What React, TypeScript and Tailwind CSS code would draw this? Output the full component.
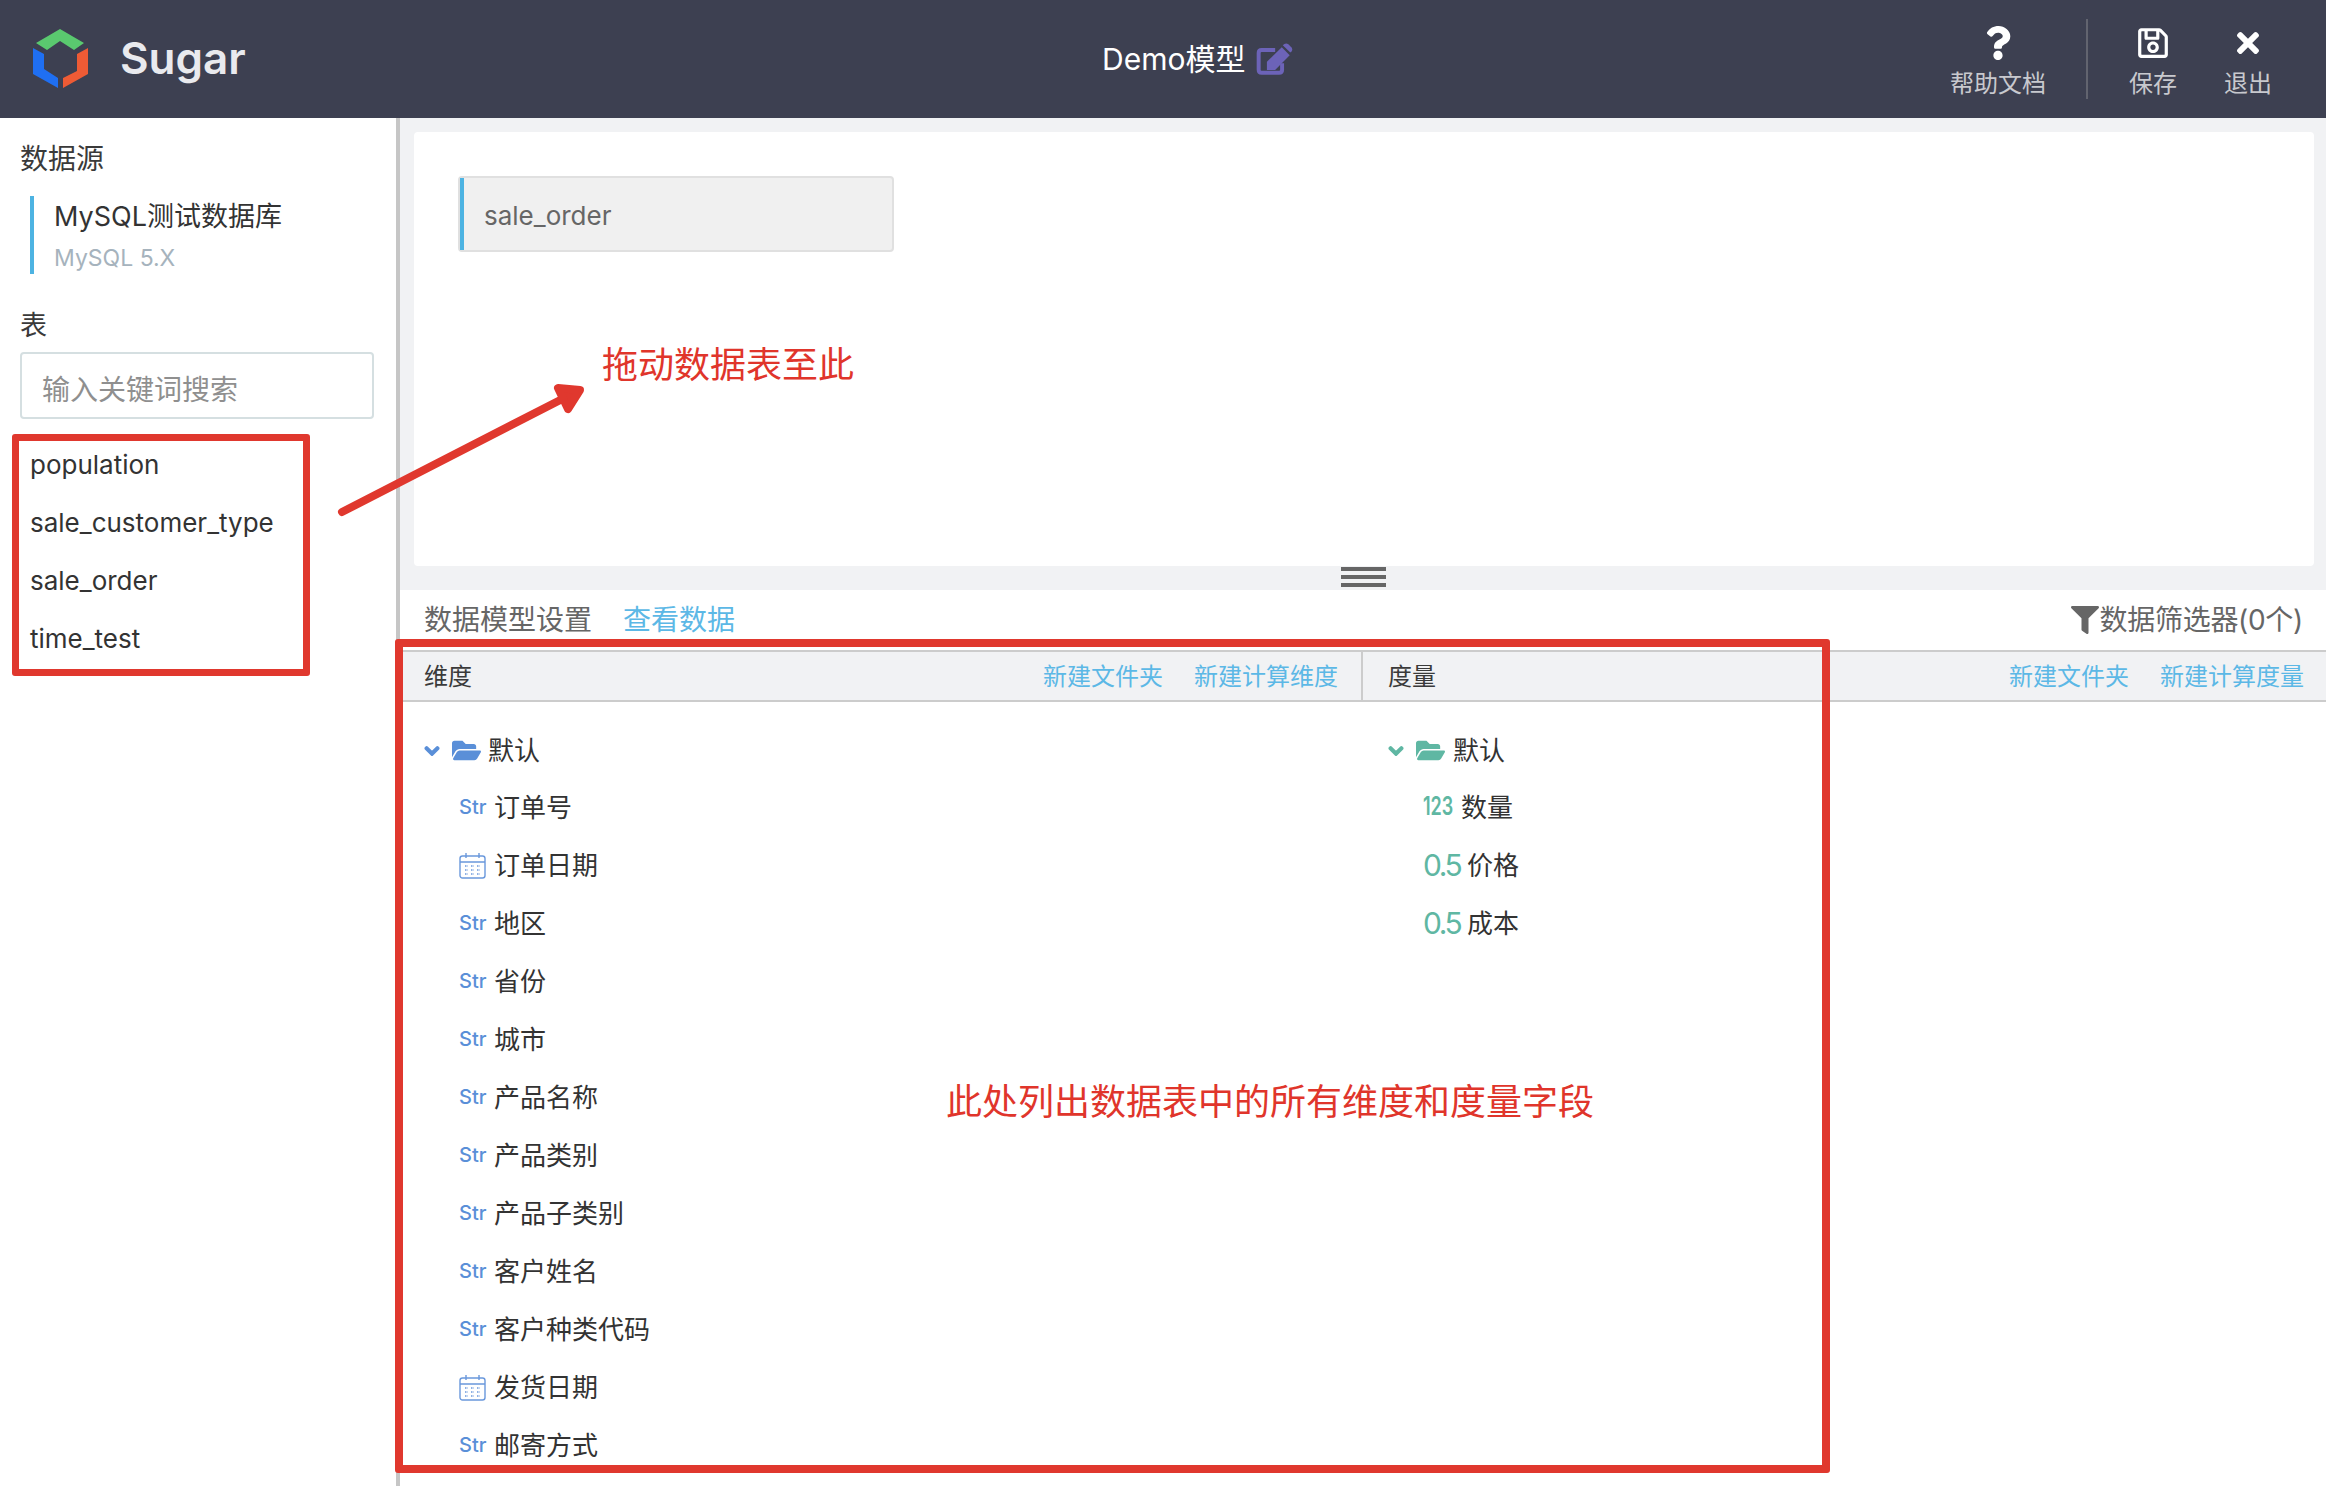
import React from "react";
import { FaQuestion, FaRegSave, FaTimes, FaFilter, FaChevronDown, FaFolderOpen } from "react-icons/fa";

const FONT = '"Inter","Noto Sans CJK SC",sans-serif';

function Calendar() {
  return (
    <svg width="27" height="27" viewBox="0 0 27 27" fill="none" stroke="#6a98dc" strokeWidth="1.4">
      <rect x="1" y="4" width="25" height="22" rx="2.5" />
      <path d="M1 10h25M7 1v5M20 1v5" />
      <path d="M6 14h3M12 14h3M18 14h3M6 18h3M12 18h3M18 18h3M6 22h3M12 22h3M18 22h3" strokeWidth="1.6" strokeDasharray="1.5 1" />
    </svg>
  );
}

function EditIcon() {
  return (
    <svg width="37" height="33" viewBox="650 125 112 100" className="ml-[11px]">
      <path d="M708 146H667Q658 146 658 155V206Q658 215 667 215H720Q729 215 729 206V186" fill="none" stroke="#6c63b8" strokeWidth="12" />
      <path d="M683 207V182L728 138L752 162L708 207Z" fill="#6c63b8" />
      <path d="M736 128Q742 124 748 129L757 138Q762 144 758 150L754 154L731 132Z" fill="#6c63b8" />
    </svg>
  );
}

function Field({ type, name }: { type: "str" | "date"; name: string }) {
  return (
    <div className="h-[58px] flex items-center pl-[59px]">
      <span className="w-[35px] shrink-0 flex items-center">
        {type === "str" ? (
          <span className="text-[20px] font-medium text-[#5a8fd8]">Str</span>
        ) : (
          <Calendar />
        )}
      </span>
      <span className="text-[26px] text-[#333]">{name}</span>
    </div>
  );
}

function Measure({ badge, name }: { badge: string; name: string }) {
  return (
    <div className="h-[58px] flex items-center pl-[60px]">
      {badge === "123" ? (
        <span className="w-[38px] shrink-0 text-[25px] font-semibold text-[#5fb7a3] inline-block origin-left scale-x-[0.72]">123</span>
      ) : (
        <span className="w-[44px] shrink-0 text-[30px] text-[#5fb7a3] tracking-[-2.5px]">{badge}</span>
      )}
      <span className="text-[26px] text-[#333]">{name}</span>
    </div>
  );
}

const dims: [("str" | "date"), string][] = [
  ["str", "订单号"],
  ["date", "订单日期"],
  ["str", "地区"],
  ["str", "省份"],
  ["str", "城市"],
  ["str", "产品名称"],
  ["str", "产品类别"],
  ["str", "产品子类别"],
  ["str", "客户姓名"],
  ["str", "客户种类代码"],
  ["date", "发货日期"],
  ["str", "邮寄方式"],
];

function HeadAction({ children }: { children: React.ReactNode }) {
  return <span className="text-[24px] text-[#5cb8e6]">{children}</span>;
}

function HeadTool({ label, icon }: { label: string; icon: React.ReactNode }) {
  return (
    <div className="flex flex-col items-center gap-[4px] mt-[8px]">
      <div className="h-[38px] flex items-center justify-center text-white">{icon}</div>
      <span className="text-[24px] leading-[36px] text-[#c8c9ce]">{label}</span>
    </div>
  );
}

export default function App() {
  return (
    <div className="relative w-[2326px] h-[1486px] overflow-hidden bg-white flex flex-col" style={{ fontFamily: FONT }}>
      <header className="h-[118px] shrink-0 bg-[#3d4051] flex items-center pl-[33px] relative">
        <svg width="56" height="60" viewBox="33 28 56 60" className="shrink-0">
          <polygon points="60,28 84,42 74,49 60,40 47,49 36,42" fill="#5ac96f" />
          <polygon points="33,47 44,53 44,68 58,77 58,87 33,73" fill="#1f6ff2" />
          <polygon points="88,47 88,73 63,87 63,77 77,70 77,53" fill="#ee5b35" />
        </svg>
        <span className="ml-[31px] -mt-[2px] text-[44px] font-semibold text-[#e9eaee]">Sugar</span>
        <div className="absolute left-[1102px] top-0 h-[118px] flex items-center">
          <span className="text-[30px] text-white">Demo模型</span>
          <EditIcon />
        </div>
        <div className="absolute right-[0px] top-0 h-[118px] flex items-center">
          <HeadTool label="帮助文档" icon={<FaQuestion size={34} />} />
          <div className="w-[2px] h-[80px] bg-[#62646f] ml-[40px] mr-[41px]" />
          <HeadTool label="保存" icon={<FaRegSave size={34} />} />
          <div className="w-[47px]" />
          <HeadTool label="退出" icon={<FaTimes size={32} />} />
          <div className="w-[54px]" />
        </div>
      </header>

      <div className="flex flex-1 min-h-0">
        <aside className="w-[400px] shrink-0 border-r-4 border-[#c6c6c6] pl-[20px]">
          <div className="mt-[23px] text-[28px] leading-[36px] text-[#3a3a3a]">数据源</div>
          <div className="mt-[19px] ml-[10px] border-l-4 border-[#4db3e2] pl-[20px] h-[78px]">
            <div className="text-[27px] leading-[42px] text-[#333]">MySQL测试数据库</div>
            <div className="mt-[4px] text-[23px] leading-[32px] text-[#a6b3bd]">MySQL 5.X</div>
          </div>
          <div className="mt-[34px] text-[27px] leading-[36px] text-[#3a3a3a]">表</div>
          <div className="mt-[8px] w-[354px] h-[67px] border-2 border-[#d5dfe1] rounded-[4px] flex items-center pl-[20px] pt-[8px] text-[28px] text-[#8f8f8f]">
            输入关键词搜索
          </div>
          <div className="mt-[16px] ml-[10px]">
            {["population", "sale_customer_type", "sale_order", "time_test"].map((t) => (
              <div key={t} className="h-[58px] flex items-center text-[26px] text-[#333]">{t}</div>
            ))}
          </div>
        </aside>

        <main className="flex-1 min-w-0 flex flex-col">
          <section className="h-[472px] shrink-0 bg-[#f1f2f4] pt-[14px] pl-[14px] pr-[12px] flex flex-col">
            <div className="h-[434px] bg-white rounded-[4px] pl-[44px] pt-[44px]">
              <div className="w-[436px] h-[76px] bg-[#f0f0f0] border-2 border-[#e0e0e0] rounded-[4px] flex">
                <div className="w-[4px] bg-[#4db3e2]" />
                <div className="flex items-center pl-[20px] pt-[3px] text-[26px] text-[#666]">sale_order</div>
              </div>
            </div>
            <div className="ml-[927px] w-[45px] mt-[1px] flex flex-col gap-[4px]">
              <div className="h-[4px] bg-[#666]" />
              <div className="h-[4px] bg-[#666]" />
              <div className="h-[4px] bg-[#666]" />
            </div>
          </section>

          <div className="h-[60px] shrink-0 flex items-center pl-[24px] pr-[23px] text-[28px]">
            <span className="text-[#666]">数据模型设置</span>
            <span className="ml-[31px] text-[#5cb8e6]">查看数据</span>
            <span className="ml-auto flex items-center text-[#666] tracking-[-0.3px]">
              <FaFilter size={28} className="mr-[1px]" />
              数据筛选器(0个)
            </span>
          </div>

          <div className="h-[52px] shrink-0 flex bg-[#f1f2f4] border-y-2 border-[#ccc]">
            <div className="w-[963px] shrink-0 border-r-2 border-[#ccc] flex items-center pl-[24px] pr-[23px] pt-[2px] gap-[31px]">
              <span className="text-[24px] text-[#3a3a3a] mr-auto">维度</span>
              <HeadAction>新建文件夹</HeadAction>
              <HeadAction>新建计算维度</HeadAction>
            </div>
            <div className="flex-1 flex items-center pl-[25px] pr-[22px] pt-[2px] gap-[31px]">
              <span className="text-[24px] text-[#3a3a3a] mr-auto">度量</span>
              <HeadAction>新建文件夹</HeadAction>
              <HeadAction>新建计算度量</HeadAction>
            </div>
          </div>

          <div className="flex flex-1 min-h-0 pt-[21px] overflow-hidden">
            <div className="w-[963px] shrink-0">
              <div className="h-[55px] flex items-center pl-[24px]">
                <FaChevronDown size={16} stroke="currentColor" strokeWidth={50} className="text-[#5a8fd8]" />
                <FaFolderOpen size={29} className="ml-[12px] text-[#5a8fd8]" />
                <span className="ml-[7px] text-[26px] text-[#333]">默认</span>
              </div>
              {dims.map(([t, n]) => (
                <Field key={n} type={t} name={n} />
              ))}
            </div>
            <div className="flex-1">
              <div className="h-[55px] flex items-center pl-[25px]">
                <FaChevronDown size={16} stroke="currentColor" strokeWidth={50} className="text-[#5fb7a3]" />
                <FaFolderOpen size={29} className="ml-[12px] text-[#5fb7a3]" />
                <span className="ml-[8px] text-[26px] text-[#333]">默认</span>
              </div>
              <Measure badge="123" name="数量" />
              <Measure badge="0.5" name="价格" />
              <Measure badge="0.5" name="成本" />
            </div>
          </div>
        </main>
      </div>

      {/* annotations drawn over the screenshot */}
      <div className="absolute left-[12px] top-[434px] w-[298px] h-[242px] border-[7px] border-[#e0382e] rounded-[3px]" />
      <div className="absolute left-[395px] top-[639px] w-[1435px] h-[834px] border-[8px] border-[#e0382e] rounded-[3px]" />
      <svg className="absolute left-0 top-0 pointer-events-none" width="700" height="600" fill="none" stroke="#e0382e" strokeWidth="8" strokeLinecap="round" strokeLinejoin="round">
        <path d="M342 512L574 393" />
        <path d="M558 388L580 390L568 409Z" fill="#e0382e" />
      </svg>
      <div className="absolute left-[602px] top-[340px] text-[36px] leading-[50px] text-[#e0352b]">拖动数据表至此</div>
      <div className="absolute left-[946px] top-[1077px] text-[36px] leading-[50px] text-[#e0352b]">此处列出数据表中的所有维度和度量字段</div>
    </div>
  );
}
